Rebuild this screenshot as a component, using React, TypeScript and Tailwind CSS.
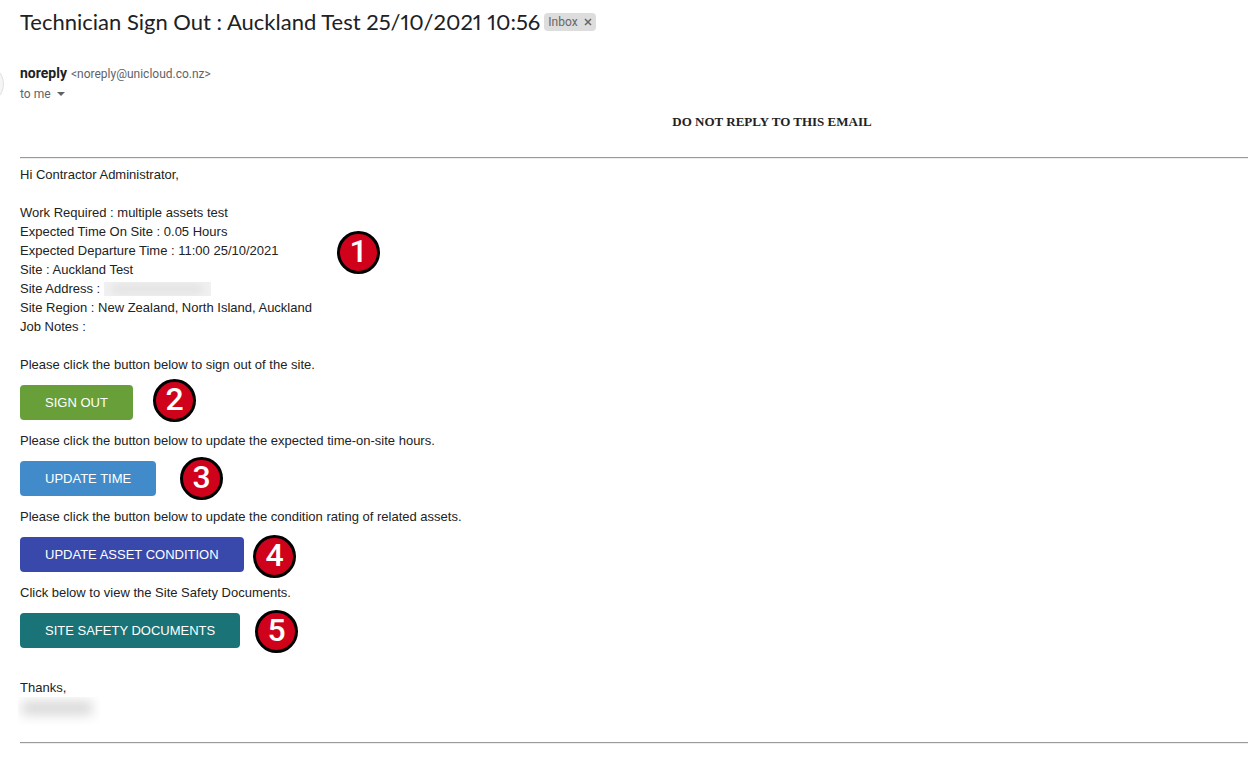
import type { ReactNode } from 'react'

interface Action {
  prompt: string
  label: string
  color: string
  step: number
  marker: string
}

const DETAILS_BEFORE = [
  'Work Required : multiple assets test',
  'Expected Time On Site : 0.05 Hours',
  'Expected Departure Time : 11:00 25/10/2021',
  'Site : Auckland Test',
]

const ACTIONS: Action[] = [
  {
    prompt: 'Please click the button below to sign out of the site.',
    label: 'SIGN OUT',
    color: 'bg-[#689f38]',
    step: 2,
    marker: 'left-[133px] -top-1.5',
  },
  {
    prompt: 'Please click the button below to update the expected time-on-site hours.',
    label: 'UPDATE TIME',
    color: 'bg-[#428bca]',
    step: 3,
    marker: 'left-40 -top-1',
  },
  {
    prompt: 'Please click the button below to update the condition rating of related assets.',
    label: 'UPDATE ASSET CONDITION',
    color: 'bg-[#3949ab]',
    step: 4,
    marker: 'left-[233px] -top-0.5',
  },
  {
    prompt: 'Click below to view the Site Safety Documents.',
    label: 'SITE SAFETY DOCUMENTS',
    color: 'bg-[#1a7376]',
    step: 5,
    marker: 'left-[235px] -top-[3px]',
  },
]

export default function App() {
  return (
    <main className="relative min-h-screen overflow-hidden bg-white pl-5 font-['Liberation_Sans',Arial,sans-serif] text-[13px] leading-[19px] text-[#222222]">
      {/* sender avatar, mostly scrolled off to the left */}
      <div className="absolute -left-9 top-16 size-10 rounded-full border border-[#e0e0e0] bg-[#f5f5f5]" />

      <header className="font-[Roboto,sans-serif]">
        <div className="flex items-center gap-1 pt-2">
          <h1 className="font-[Lato,sans-serif] text-[22px] leading-7 text-[#202124] proportional-nums">
            Technician Sign Out : Auckland Test 25/10/2021 10:56
          </h1>
          <div className="flex h-[18px] items-center gap-1.5 rounded bg-[#dddddd] px-1 text-xs text-[#666666]">
            <button type="button">Inbox</button>
            <button type="button" aria-label="Remove label Inbox">
              <svg className="size-2" viewBox="0 0 8 8" fill="none" stroke="currentColor" strokeWidth="1.5">
                <path d="M1 1l6 6M7 1l-6 6" />
              </svg>
            </button>
          </div>
        </div>

        <div className="mt-[27px] flex items-baseline gap-1">
          <span className="text-sm leading-5 font-bold text-[#202124]">noreply</span>
          <span className="text-xs leading-5 text-[#5f6368]">&lt;noreply@unicloud.co.nz&gt;</span>
        </div>
        <button type="button" className="flex h-5 items-center gap-1.5 text-xs text-[#5f6368]">
          to me
          <svg className="h-1 w-2" viewBox="0 0 8 4" fill="currentColor">
            <path d="M0 0h8L4 4z" />
          </svg>
        </button>
      </header>

      <p className="mt-2 pl-[276px] text-center font-['Liberation_Serif','Times_New_Roman',serif] font-bold">
        DO NOT REPLY TO THIS EMAIL
      </p>
      <Divider className="mt-[26px]" />

      <section className="relative mt-1.5">
        <p>Hi Contractor Administrator,</p>
        <ul className="mt-[19px]">
          {DETAILS_BEFORE.map((line) => (
            <li key={line}>{line}</li>
          ))}
          <li className="flex items-center gap-1">
            Site Address :
            <Redacted className="h-3.5 w-[107px] bg-[#f1f1f1]" inner="inset-x-2 inset-y-1 bg-[#dcdcdc] blur-[4px]" />
          </li>
          <li>Site Region : New Zealand, North Island, Auckland</li>
          <li>Job Notes :</li>
        </ul>
        <Marker className="left-[317px] top-[66px]">1</Marker>
      </section>

      <section className="mt-[19px] space-y-[11px]">
        {ACTIONS.map((action) => (
          <div key={action.step}>
            <p>{action.prompt}</p>
            <div className="relative mt-[11px]">
              <button
                type="button"
                className={`block h-[35px] rounded px-[25px] text-white ${action.color}`}
              >
                {action.label}
              </button>
              <Marker className={action.marker}>{action.step}</Marker>
            </div>
          </div>
        ))}
      </section>

      <footer className="mt-[30px]">
        <p>Thanks,</p>
        <Redacted className="-ml-0.5 h-7 w-[82px]" inner="left-1 right-2 top-1 h-3.5 bg-[#d8d8d8] blur-[6px]" />
        <Divider className="mt-[17px]" />
      </footer>
    </main>
  )
}

function Divider({ className }: { className: string }) {
  return <hr className={`h-0.5 border-t border-b border-t-[#9a9a9a] border-b-[#eeeeee] ${className}`} />
}

function Redacted({ className, inner }: { className: string; inner: string }) {
  return (
    <div className={`relative overflow-hidden ${className}`}>
      <div className={`absolute ${inner}`} />
    </div>
  )
}

function Marker({ className, children }: { className: string; children: ReactNode }) {
  return (
    <span
      className={`absolute flex size-[43px] items-center justify-center rounded-full border-3 border-black bg-[#d0021b] pb-1 font-[Roboto,sans-serif] text-[32px] leading-8 font-medium text-white ${className}`}
    >
      {children}
    </span>
  )
}
